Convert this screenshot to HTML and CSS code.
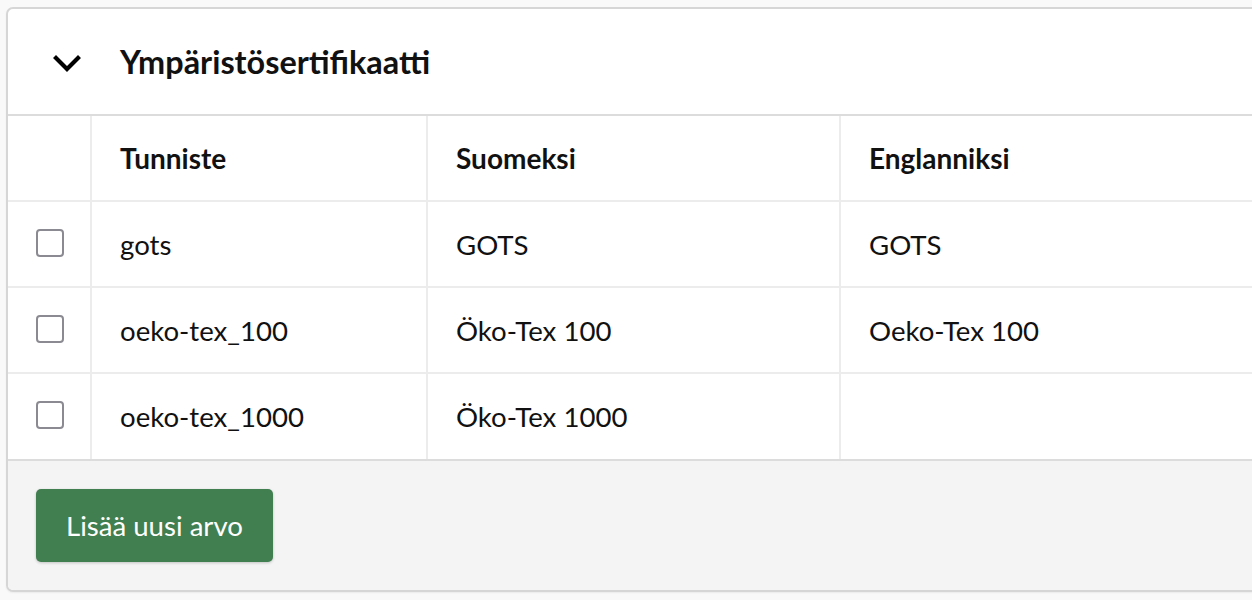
FILE: index.html
```html
<!DOCTYPE html>
<html lang="fi">
<head>
<meta charset="utf-8">
<title>Ympäristösertifikaatti</title>
<link rel="stylesheet" href="styles.css">
</head>
<body>
<section class="card">
  <header class="card-header">
    <span class="chevron">
      <svg width="28" height="20" viewBox="0 0 28 20"><path d="M3 4 L14 15 L25 4" fill="none" stroke="#000" stroke-width="4.2" stroke-linecap="square" stroke-linejoin="miter"/></svg>
    </span>
    <h2 class="title">Ympäristösertifikaatti</h2>
  </header>
  <table class="values">
    <colgroup>
      <col class="c-check"><col class="c-id"><col class="c-fi"><col class="c-en">
    </colgroup>
    <thead>
      <tr><th></th><th>Tunniste</th><th>Suomeksi</th><th>Englanniksi</th></tr>
    </thead>
    <tbody>
      <tr><td><span class="checkbox"></span></td><td>gots</td><td>GOTS</td><td>GOTS</td></tr>
      <tr><td><span class="checkbox"></span></td><td>oeko-tex_100</td><td>Öko-Tex 100</td><td>Oeko-Tex 100</td></tr>
      <tr><td><span class="checkbox"></span></td><td>oeko-tex_1000</td><td>Öko-Tex 1000</td><td></td></tr>
    </tbody>
  </table>
  <footer class="card-footer">
    <button class="btn-add">Lisää uusi arvo</button>
  </footer>
</section>
</body>
</html>
```

FILE: styles.css
```css
html, body {
  margin: 0;
  padding: 0;
  background: #f9f9f9;
  overflow: hidden;
}
body {
  font-family: Lato, "Noto Sans", sans-serif;
  color: #111;
  width: 1252px;
  height: 600px;
}
.card {
  margin: 7px 0 0 6px;
  width: 1300px;
  background: #fff;
  border: 2px solid #d6d6d6;
  border-radius: 7px;
  overflow: hidden;
  box-shadow: 0 1px 2px rgba(0,0,0,0.06);
}
.card-header {
  height: 105px;
  display: flex;
  align-items: center;
  border-bottom: 2px solid #dcdcdc;
}
.chevron {
  width: 112px;
  display: flex;
  justify-content: flex-start;
  padding-left: 45px;
  box-sizing: border-box;
  margin-top: 4px;
}
.chevron svg { display: block; }
.title {
  margin: 0;
  font-size: 32.4px;
  font-weight: 700;
  color: #111;
  letter-spacing: 0;
}
.values {
  border-collapse: collapse;
  width: 100%;
  table-layout: fixed;
}
.c-check { width: 83px; }
.c-id { width: 336px; }
.c-fi { width: 413px; }
.values th, .values td {
  border: 2px solid #ececec;
  height: 86px;
  padding: 0 28px;
  text-align: left;
  vertical-align: middle;
  font-size: 27.6px;
  box-sizing: border-box;
}
.values th { height: 85px; font-size: 28px; }
.values tr:first-child th { border-top: 0; }
.values th:first-child, .values td:first-child { border-left: 0; }
.values tbody tr:last-child td { border-bottom: 0; }
.values th {
  font-weight: 700;
  color: #111;
}
.values td {
  font-weight: 400;
  color: #111;
}
.checkbox {
  display: block;
  width: 28px;
  height: 28px;
  box-sizing: border-box;
  border: 2px solid #8b8a93;
  border-radius: 4px;
  background: #fff;
  margin-top: -3px;
}
.card-footer {
  background: #f4f4f4;
  border-top: 2px solid #dcdcdc;
  padding: 28px;
  height: 73px;
  box-sizing: content-box;
}
.btn-add {
  height: 73px;
  padding: 0 30px;
  background: #417f50;
  color: #fff;
  border: 0;
  border-radius: 5px;
  font-family: Lato, "Noto Sans", sans-serif;
  font-size: 27.6px;
  box-shadow: 0 1px 3px rgba(0,0,0,0.2);
  display: block;
}
```
